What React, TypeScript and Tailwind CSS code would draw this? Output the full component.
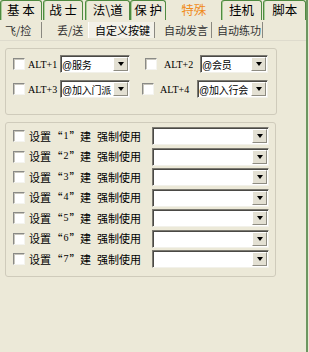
const cjk = "font-['SimSun','Noto_Sans_CJK_SC',sans-serif]"
const serif = "font-['Liberation_Serif',serif]"

function Check({ className = "" }: { className?: string }) {
  return (
    <div
      className={`w-[12px] h-[12px] shrink-0 bg-white border border-t-[#8a8a86] border-l-[#8a8a86] border-b-[#f4f4f0] border-r-[#f4f4f0] shadow-[inset_1px_1px_0_#c8c6bc] ${className}`}
    />
  )
}

function Combo({ text = "", className = "" }: { text?: string; className?: string }) {
  return (
    <div
      className={`flex h-[18px] shrink-0 bg-white border border-t-[#7c7a72] border-l-[#7c7a72] border-b-[#f2f1ea] border-r-[#f2f1ea] shadow-[inset_1px_1px_0_#4a4945] ${className}`}
    >
      <span className="flex-1 min-w-0 pl-[1px] pt-[1px] text-[10px] tracking-[-0.2px] leading-[15px] whitespace-nowrap">
        {text && <span className="font-['Liberation_Sans',sans-serif] text-[10px]">@</span>}
        {text.slice(1)}
      </span>
      <div className="w-[15px] h-[14px] mt-[1px] mr-[1px] shrink-0 bg-[#e3e0d3] border border-t-white border-l-white border-b-[#8e8c82] border-r-[#8e8c82] flex items-center justify-center">
        <div className="w-0 h-0 border-l-[3px] border-r-[3px] border-t-[4px] border-l-transparent border-r-transparent border-t-black" />
      </div>
    </div>
  )
}

const topTabs = [
  { label: "基 本", ml: "ml-0", w: "w-[42px]" },
  { label: "战 士", ml: "ml-[1px]", w: "w-[41px]" },
  { label: "法\\道", ml: "ml-[2px]", w: "w-[45px]" },
  { label: "保 护", ml: "ml-0", w: "w-[36px]" },
  { label: "特殊", ml: "ml-[3px]", w: "w-[50px]", active: true },
  { label: "挂机", ml: "ml-[2px]", w: "w-[42px]" },
  { label: "脚本", ml: "ml-[1px]", w: "w-[43px]" },
]

const subTabs = [
  { label: "飞/捡", w: "w-[42px]", pl: "pl-[5px]" },
  { label: "丢/送", w: "w-[46px]", pl: "pl-[15px]", noSep: true },
  { label: "自定义按键", w: "w-[67px]", pl: "pl-[6px]", active: true },
  { label: "自动发言", w: "w-[57px]", pl: "pl-[9px]" },
  { label: "自动练功", w: "w-[51px]", pl: "pl-[5px]" },
]

export default function App() {
  return (
    <div className={`w-[309px] h-[352px] bg-[#ece9d8] overflow-hidden text-black ${cjk}`}>
      <div className="w-[308px] h-full border-r-2 border-[#6d9660]">
        {/* top tabs */}
        <div className="flex h-[20px]">
          {topTabs.map(t =>
            t.active ? (
              <div key={t.label} className={`${t.ml} ${t.w} h-[20px] flex items-center justify-center text-[12.5px] text-[#f08c1c]`}>
                {t.label}
              </div>
            ) : (
              <div
                key={t.label}
                className={`${t.ml} ${t.w} h-[20px] flex items-center justify-center text-[12.5px] border border-b-0 border-[#4f8a40] rounded-t-[3px] shadow-[inset_1px_0_0_#a9cf98]`}
              >
                {t.label}
              </div>
            )
          )}
        </div>

        {/* sub tabs */}
        <div className="flex h-[20px] items-stretch">
          {subTabs.map(t => (
            <div
              key={t.label}
              className={`${t.w} ${t.pl} flex items-center text-[11px] whitespace-nowrap my-[2px] ${t.noSep ? "" : "border-r border-[#8a8880]"} ${t.active ? "bg-[#f3f1e8] border-l border-l-white" : "text-[#333]"}`}
            >
              {t.label}
            </div>
          ))}
        </div>

        <div className="border-t border-[#dedbcd] pt-[7px]">
          {/* group 1 */}
          <div className="ml-[5px] w-[272px] h-[67px] border border-[#cfcbbb] rounded-[3px] pt-[6px] flex flex-col gap-[7px]">
            <div className="flex items-center h-[18px]">
              <Check className="ml-[7px]" />
              <span className={`ml-[3px] w-[30px] text-[10px] ${serif}`}>ALT+1</span>
              <Combo className="ml-[2px] w-[70px]" text="@服务" />
              <Check className="ml-[15px]" />
              <span className={`ml-[7px] w-[30px] text-[10px] ${serif}`}>ALT+2</span>
              <Combo className="ml-[6px] w-[68px]" text="@会员" />
            </div>
            <div className="flex items-center h-[18px]">
              <Check className="ml-[7px]" />
              <span className={`ml-[3px] w-[30px] text-[10px] ${serif}`}>ALT+3</span>
              <Combo className="ml-[2px] w-[70px]" text="@加入门派" />
              <Check className="ml-[12px]" />
              <span className={`ml-[6px] w-[30px] text-[10px] ${serif}`}>ALT+4</span>
              <Combo className="ml-[7px] w-[71px]" text="@加入行会" />
            </div>
          </div>

          {/* group 2 */}
          <div className="mt-[7px] ml-[5px] w-[271px] h-[155px] border border-[#cfcbbb] rounded-[3px] pt-[4px] flex flex-col gap-[2.5px]">
            {[1, 2, 3, 4, 5, 6, 7].map(n => (
              <div key={n} className="flex items-center h-[18px] text-[11px] whitespace-nowrap">
                <Check className="ml-[7px]" />
                <span className="ml-[4px] w-[23px]">设置</span>
                <span className="w-[28px] flex justify-center">
                  <span>“</span>
                  <span className={`${serif} text-[10px] mx-[1px]`}>{n}</span>
                  <span>”</span>
                </span>
                <span className="w-[17px]">建</span>
                <span className="w-[55px]">强制使用</span>
                <Combo className="w-[117px]" />
              </div>
            ))}
          </div>
        </div>
      </div>
    </div>
  )
}
